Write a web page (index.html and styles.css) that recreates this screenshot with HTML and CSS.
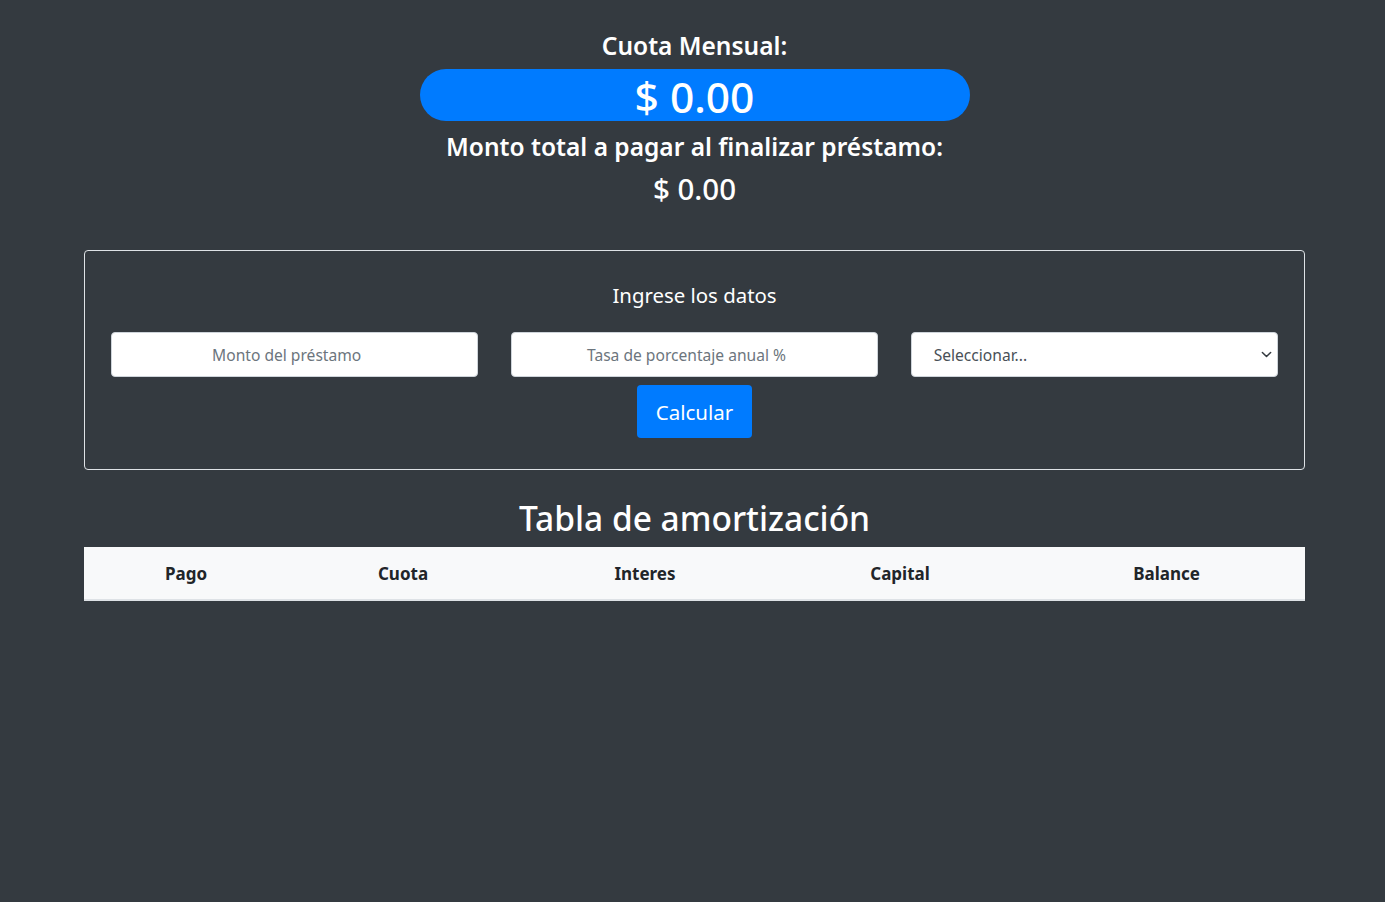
FILE: index.html
```html
<!DOCTYPE html>
<html lang="es">
<head>
<meta charset="utf-8">
<title>Calculadora de préstamo</title>
<link rel="stylesheet" href="styles.css">
</head>
<body>
<main class="page">
  <section class="summary">
    <h4 class="label">Cuota Mensual:</h4>
    <div class="pill">$ 0.00</div>
    <h4 class="label">Monto total a pagar al finalizar préstamo:</h4>
    <div class="total">$ 0.00</div>
  </section>

  <section class="card">
    <h5 class="card-title">Ingrese los datos</h5>
    <div class="fields">
      <input class="field centered" type="text" placeholder="Monto del préstamo">
      <input class="field centered" type="text" placeholder="Tasa de porcentaje anual %">
      <div class="select-wrap">
        <select class="field select">
          <option>Seleccionar...</option>
        </select>
        <svg class="chev" viewBox="0 0 16 16" width="12" height="12"><path d="M2 5l6 6 6-6" fill="none" stroke="#343a40" stroke-width="2.2" stroke-linecap="round" stroke-linejoin="round"/></svg>
      </div>
    </div>
    <button class="btn" type="button">Calcular</button>
  </section>

  <h2 class="table-title">Tabla de amortización</h2>
  <table class="amort">
    <colgroup>
      <col class="c1"><col class="c2"><col class="c3"><col class="c4"><col class="c5">
    </colgroup>
    <thead>
      <tr><th>Pago</th><th>Cuota</th><th>Interes</th><th>Capital</th><th>Balance</th></tr>
    </thead>
    <tbody></tbody>
  </table>
</main>
</body>
</html>
```

FILE: styles.css
```css
html, body {
  margin: 0;
  padding: 0;
  background: #343a40;
  color: #ffffff;
  font-family: "Noto Sans", "Open Sans", sans-serif;
}

.page {
  padding: 28px 80px 40px 84px;
  display: flex;
  flex-direction: column;
  align-items: stretch;
}

.summary {
  display: flex;
  flex-direction: column;
  align-items: center;
}

.label {
  margin: 0;
  font-size: 24.5px;
  font-weight: 600;
  line-height: 36px;
}

.pill {
  width: 550px;
  height: 52px;
  background: #007bff;
  border-radius: 26px;
  text-align: center;
  font-size: 42.5px;
  font-weight: 500;
  line-height: 56px;
  margin: 5px 0 8px;
}

.total {
  font-size: 29.5px;
  font-weight: 500;
  line-height: 42px;
  margin-top: 3px;
}

.card {
  margin-top: 40px;
  border: 1px solid #dee2e6;
  border-radius: 4px;
  padding: 26px 26px 31px;
  display: flex;
  flex-direction: column;
  align-items: center;
}

.card-title {
  margin: 2px 0 0;
  font-size: 20.4px;
  font-weight: 400;
  line-height: 32px;
}

.fields {
  align-self: stretch;
  display: grid;
  grid-template-columns: 1fr 1fr 1fr;
  gap: 32.5px;
  margin-top: 21px;
}

.field {
  box-sizing: border-box;
  height: 45px;
  width: 100%;
  border: 1px solid #ced4da;
  border-radius: 4px;
  background: #fff;
  font-family: inherit;
  font-size: 15.6px;
  color: #495057;
  padding: 0 22px;
  outline: none;
}

.centered {
  text-align: center;
  padding: 0 30px 0 14px;
}

.field::placeholder { color: #6c757d; }

.select-wrap { position: relative; }

.select {
  appearance: none;
  -webkit-appearance: none;
}

.chev {
  position: absolute;
  right: 6px;
  top: 17px;
  width: 11px;
  height: 11px;
  pointer-events: none;
}

.btn {
  margin-top: 8px;
  height: 53px;
  padding: 0 19px;
  border: none;
  border-radius: 4px;
  background: #007bff;
  color: #fff;
  font-family: inherit;
  font-size: 20.5px;
  line-height: 30px;
}

.table-title {
  margin: 26px 0 7px;
  text-align: center;
  font-size: 33.5px;
  font-weight: 500;
  line-height: 44px;
}

.amort {
  width: 100%;
  border-collapse: collapse;
  table-layout: fixed;
}

.c1 { width: 204px; }
.c2 { width: 230px; }
.c3 { width: 254px; }
.c4 { width: 256px; }
.c5 { width: 277px; }

.amort th {
  background: #f8f9fa;
  color: #212529;
  font-size: 17px;
  font-weight: 700;
  height: 52px;
  padding: 0;
  border-bottom: 2px solid #dee2e6;
  text-align: center;
}
```
